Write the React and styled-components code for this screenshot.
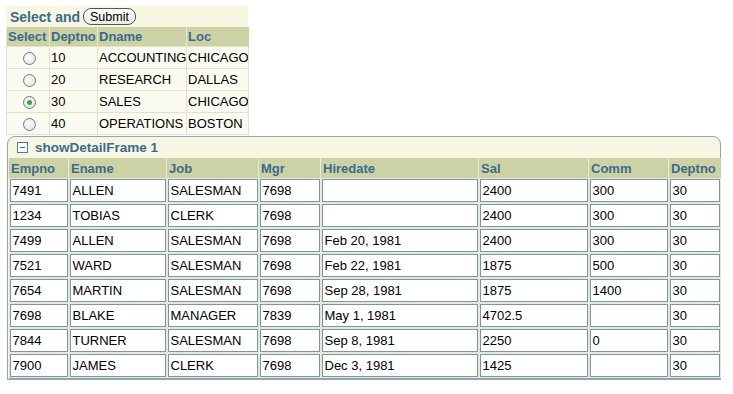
import React from 'react';
import styled, { createGlobalStyle } from 'styled-components';

const GlobalStyle = createGlobalStyle`
    body {
        margin: 0;
        background: #ffffff;
        font-family: "Liberation Sans", Arial, sans-serif;
        font-size: 13px;
        color: #000;
    }
`;

const Page = styled.div`
    padding: 6px 0 0 6px;
    width: 733px;
    height: 394px;
    box-sizing: border-box;
`;

const SelectPanel = styled.div`
    width: 242px;
    background-color: #f7f7e4;
`;

const PanelTitle = styled.div`
    height: 21px;
    display: flex;
    align-items: center;
    padding-left: 4px;
    gap: 3px;
    color: #3b6b8c;
    font-weight: bold;
    font-size: 14px;
`;

const SubmitButton = styled.button`
    height: 17px;
    padding: 0 6px;
    border: 1px solid #555;
    border-radius: 8px;
    background: linear-gradient(#ffffff, #ecebe3);
    font-family: "Liberation Sans", Arial, sans-serif;
    font-size: 12.5px;
    color: #000;
    line-height: 14px;
`;

const DeptTable = styled.table`
    border-collapse: collapse;
    width: 242px;
    table-layout: fixed;
`;

const HeadCell = styled.th`
    height: 19px;
    padding: 0 1px;
    background-color: #cdd2a6;
    color: #3b6b8c;
    font-weight: bold;
    text-align: left;
    font-size: 13px;
    border-left: 1px solid #e8ead6;
    white-space: nowrap;
    overflow: hidden;
`;

const DeptCell = styled.td`
    height: 21px;
    padding: 0 1px;
    text-align: ${p => (p.$center ? 'center' : 'left')};
    border: 1px solid #e2e2cc;
    background-color: #fbfbf1;
    white-space: nowrap;
    overflow: hidden;
`;

const Radio = styled.span`
    display: inline-block;
    width: 11px;
    height: 11px;
    margin-left: 2px;
    border-radius: 50%;
    border: 1px solid #6b7d8c;
    background: radial-gradient(circle at 40% 40%, #ffffff, #dcdcd6);
    position: relative;
    vertical-align: middle;

    &::after {
        content: '';
        display: ${p => (p.$checked ? 'block' : 'none')};
        position: absolute;
        left: 3px;
        top: 3px;
        width: 5px;
        height: 5px;
        border-radius: 50%;
        background: #3aa83a;
    }
`;

const DetailFrame = styled.div`
    margin-top: 1px;
    margin-left: 1px;
    width: 714px;
    box-sizing: border-box;
    border: 1px solid #8ea6b6;
    border-radius: 8px 8px 0 0;
    background-color: #f6f6e2;
`;

const FrameTitle = styled.div`
    height: 21px;
    display: flex;
    align-items: center;
    padding-left: 9px;
    gap: 7px;
    color: #3b6b8c;
    font-weight: bold;
    font-size: 13.5px;
`;

const EmpTable = styled.table`
    border-collapse: collapse;
    width: 712px;
    table-layout: fixed;
    border-bottom: 1px solid #8ea6b6;
`;

const EmpHead = styled.th`
    height: 20px;
    padding: 0 0 0 2px;
    background-color: #cdd2a6;
    color: #3b6b8c;
    font-weight: bold;
    text-align: left;
    font-size: 13px;
    border-left: 1px solid #e6e9d4;
    white-space: nowrap;
    overflow: hidden;
`;

const EmpCell = styled.td`
    padding: 1px;
    background-color: #e2eadb;
`;

const FieldBox = styled.div`
    height: 21px;
    line-height: 21px;
    padding-left: 2px;
    border: 1px solid #7e96a0;
    background-color: #ffffff;
    white-space: nowrap;
    overflow: hidden;
`;

const depts = [
    ['10', 'ACCOUNTING', 'CHICAGO'],
    ['20', 'RESEARCH', 'DALLAS'],
    ['30', 'SALES', 'CHICAGO'],
    ['40', 'OPERATIONS', 'BOSTON'],
];

const empCols = [
    ['Empno', 60], ['Ename', 98], ['Job', 92], ['Mgr', 62],
    ['Hiredate', 158], ['Sal', 110], ['Comm', 80], ['Deptno', 52],
];

const emps = [
    ['7491', 'ALLEN', 'SALESMAN', '7698', '', '2400', '300', '30'],
    ['1234', 'TOBIAS', 'CLERK', '7698', '', '2400', '300', '30'],
    ['7499', 'ALLEN', 'SALESMAN', '7698', 'Feb 20, 1981', '2400', '300', '30'],
    ['7521', 'WARD', 'SALESMAN', '7698', 'Feb 22, 1981', '1875', '500', '30'],
    ['7654', 'MARTIN', 'SALESMAN', '7698', 'Sep 28, 1981', '1875', '1400', '30'],
    ['7698', 'BLAKE', 'MANAGER', '7839', 'May 1, 1981', '4702.5', '', '30'],
    ['7844', 'TURNER', 'SALESMAN', '7698', 'Sep 8, 1981', '2250', '0', '30'],
    ['7900', 'JAMES', 'CLERK', '7698', 'Dec 3, 1981', '1425', '', '30'],
];

const MinusIcon = () => (
    <svg width="11" height="11" viewBox="0 0 11 11">
        <rect x="0.5" y="0.5" width="10" height="10" fill="#fff" stroke="#4f7692" />
        <line x1="3" y1="5.5" x2="8" y2="5.5" stroke="#3b6b8c" />
    </svg>
);

const App = () => {
    return (
        <Page>
            <GlobalStyle />
            <SelectPanel>
                <PanelTitle>
                    Select and <SubmitButton>Submit</SubmitButton>
                </PanelTitle>
                <DeptTable>
                    <colgroup>
                        <col style={{ width: 43 }} />
                        <col style={{ width: 48 }} />
                        <col style={{ width: 89 }} />
                        <col style={{ width: 62 }} />
                    </colgroup>
                    <thead>
                        <tr>
                            <HeadCell>Select</HeadCell>
                            <HeadCell>Deptno</HeadCell>
                            <HeadCell>Dname</HeadCell>
                            <HeadCell>Loc</HeadCell>
                        </tr>
                    </thead>
                    <tbody>
                        {depts.map(d => (
                            <tr key={d[0]}>
                                <DeptCell $center><Radio $checked={d[0] === '30'} /></DeptCell>
                                <DeptCell>{d[0]}</DeptCell>
                                <DeptCell>{d[1]}</DeptCell>
                                <DeptCell>{d[2]}</DeptCell>
                            </tr>
                        ))}
                    </tbody>
                </DeptTable>
            </SelectPanel>

            <DetailFrame>
                <FrameTitle>
                    <MinusIcon />
                    showDetailFrame 1
                </FrameTitle>
                <EmpTable>
                    <colgroup>
                        {empCols.map(c => <col key={c[0]} style={{ width: c[1] }} />)}
                    </colgroup>
                    <thead>
                        <tr>
                            {empCols.map(c => <EmpHead key={c[0]}>{c[0]}</EmpHead>)}
                        </tr>
                    </thead>
                    <tbody>
                        {emps.map((e, i) => (
                            <tr key={i}>
                                {e.map((v, j) => (
                                    <EmpCell key={j}><FieldBox>{v}</FieldBox></EmpCell>
                                ))}
                            </tr>
                        ))}
                    </tbody>
                </EmpTable>
            </DetailFrame>
        </Page>
    );
};

export default App;
